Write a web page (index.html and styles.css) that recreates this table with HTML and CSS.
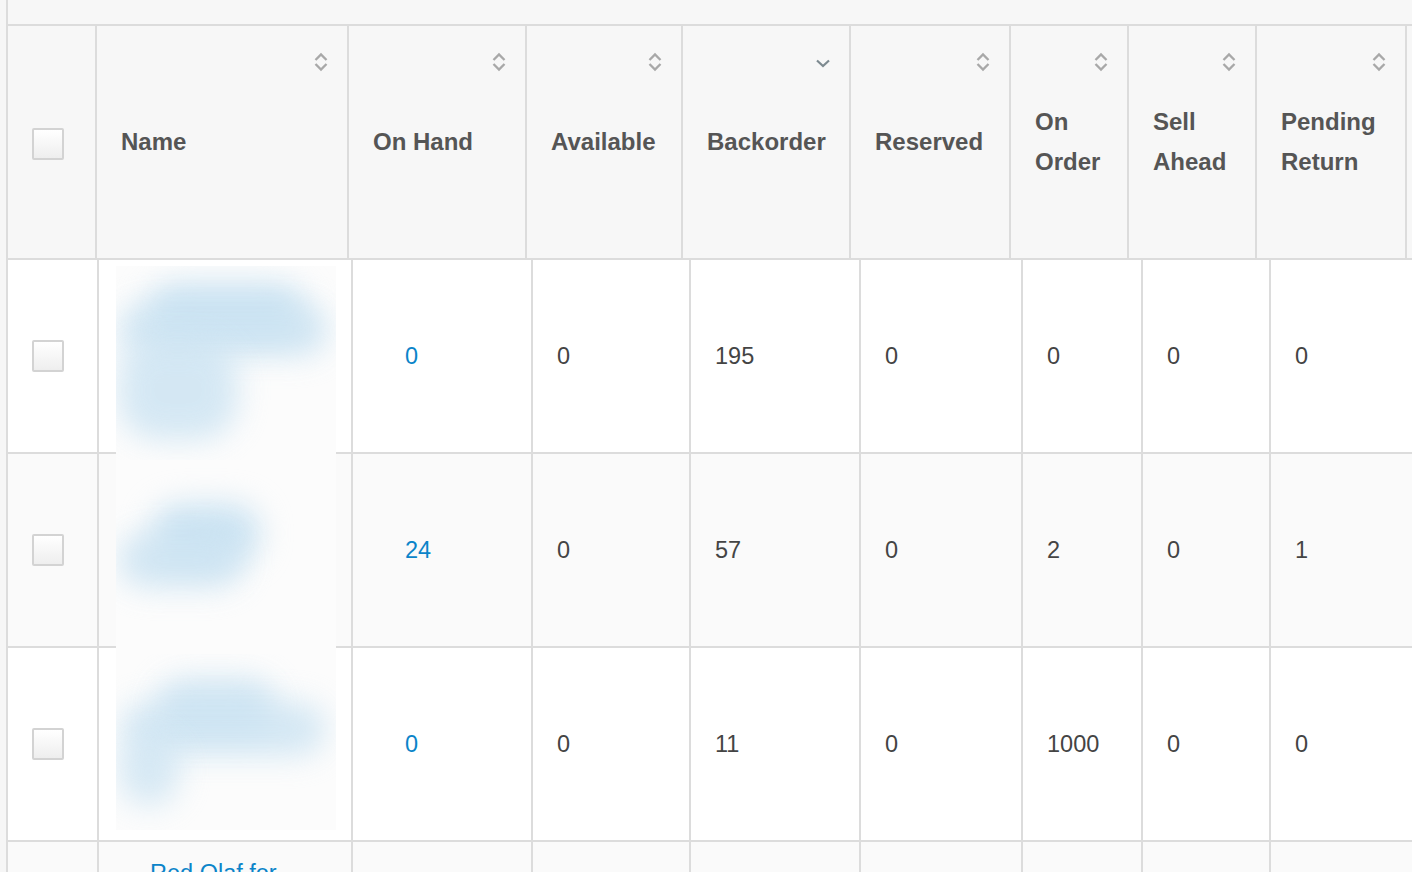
FILE: index.html
```html
<!DOCTYPE html>
<html lang="en">
<head>
  <meta charset="UTF-8">
  <title>Inventory</title>
  <link rel="stylesheet" href="styles.css">
</head>
<body>
  <div class="inventory">
    <div class="toolbar"></div>

    <div class="head-row">
      <div class="hcell"><span class="check check-head"></span></div>
      <div class="hcell"><span class="label">Name</span>
        <svg class="sort" viewBox="0 0 16 22"><path d="M2.5 9 L8 3.5 L13.5 9 M2.5 13 L8 18.5 L13.5 13"/></svg></div>
      <div class="hcell"><span class="label">On Hand</span>
        <svg class="sort" viewBox="0 0 16 22"><path d="M2.5 9 L8 3.5 L13.5 9 M2.5 13 L8 18.5 L13.5 13"/></svg></div>
      <div class="hcell"><span class="label">Available</span>
        <svg class="sort" viewBox="0 0 16 22"><path d="M2.5 9 L8 3.5 L13.5 9 M2.5 13 L8 18.5 L13.5 13"/></svg></div>
      <div class="hcell"><span class="label">Backorder</span>
        <svg class="sort-down" viewBox="0 0 16 10"><path d="M2 2.5 L8 8 L14 2.5"/></svg></div>
      <div class="hcell"><span class="label">Reserved</span>
        <svg class="sort" viewBox="0 0 16 22"><path d="M2.5 9 L8 3.5 L13.5 9 M2.5 13 L8 18.5 L13.5 13"/></svg></div>
      <div class="hcell"><span class="label">On Order</span>
        <svg class="sort" viewBox="0 0 16 22"><path d="M2.5 9 L8 3.5 L13.5 9 M2.5 13 L8 18.5 L13.5 13"/></svg></div>
      <div class="hcell"><span class="label">Sell Ahead</span>
        <svg class="sort" viewBox="0 0 16 22"><path d="M2.5 9 L8 3.5 L13.5 9 M2.5 13 L8 18.5 L13.5 13"/></svg></div>
      <div class="hcell"><span class="label">Pending Return</span>
        <svg class="sort" viewBox="0 0 16 22"><path d="M2.5 9 L8 3.5 L13.5 9 M2.5 13 L8 18.5 L13.5 13"/></svg></div>
      <div class="hcell"></div>
    </div>

    <div class="row">
      <div class="cell"><span class="check"></span></div>
      <div class="cell name">
        <div class="thumb">
          <i class="blob b1a"></i><i class="blob b1b"></i><i class="blob b1c"></i>
        </div>
      </div>
      <div class="cell onhand"><a href="#">0</a></div>
      <div class="cell">0</div>
      <div class="cell">195</div>
      <div class="cell">0</div>
      <div class="cell">0</div>
      <div class="cell">0</div>
      <div class="cell">0</div>
    </div>

    <div class="row alt">
      <div class="cell"><span class="check"></span></div>
      <div class="cell name">
        <div class="thumb">
          <i class="blob b2a"></i><i class="blob b2b"></i>
        </div>
      </div>
      <div class="cell onhand"><a href="#">24</a></div>
      <div class="cell">0</div>
      <div class="cell">57</div>
      <div class="cell">0</div>
      <div class="cell">2</div>
      <div class="cell">0</div>
      <div class="cell">1</div>
    </div>

    <div class="row">
      <div class="cell"><span class="check"></span></div>
      <div class="cell name">
        <div class="thumb thumb-short">
          <i class="blob b3a"></i><i class="blob b3b"></i><i class="blob b3c"></i>
        </div>
      </div>
      <div class="cell onhand"><a href="#">0</a></div>
      <div class="cell">0</div>
      <div class="cell">11</div>
      <div class="cell">0</div>
      <div class="cell">1000</div>
      <div class="cell">0</div>
      <div class="cell">0</div>
    </div>

    <div class="row alt">
      <div class="cell"><span class="check"></span></div>
      <div class="cell name-text"><a href="#">Red Olaf for</a></div>
      <div class="cell onhand"></div>
      <div class="cell"></div>
      <div class="cell"></div>
      <div class="cell"></div>
      <div class="cell"></div>
      <div class="cell"></div>
      <div class="cell"></div>
    </div>
  </div>
</body>
</html>
```

FILE: styles.css
```css
* {
  margin: 0;
  padding: 0;
  box-sizing: border-box;
}

html, body {
  overflow: hidden;
  height: 100%;
}

body {
  background: #f6f6f6;
  font-family: "Liberation Sans", Arial, sans-serif;
  color: #444;
}

.inventory {
  margin-left: 6px;
  border-left: 2px solid #dcdcdc;
  background: #fff;
  min-height: 100%;
}

.toolbar {
  height: 26px;
  background: #f7f7f7;
  border-bottom: 2px solid #dcdcdc;
}

.head-row {
  display: grid;
  grid-template-columns: 89px 252px 178px 156px 168px 160px 118px 128px 150px 60px;
  background: #f7f7f7;
}

.hcell {
  position: relative;
  height: 234px;
  display: flex;
  align-items: center;
  padding: 0 6px 0 24px;
  border-right: 2px solid #dcdcdc;
  border-bottom: 2px solid #dcdcdc;
}

.label {
  font-size: 24px;
  font-weight: bold;
  line-height: 40px;
  color: #555;
}

.sort {
  position: absolute;
  top: 25px;
  right: 18px;
  width: 16px;
  height: 22px;
  fill: none;
  stroke: #a8a8a8;
  stroke-width: 2.3;
}

.sort-down {
  position: absolute;
  top: 32px;
  right: 18px;
  width: 16px;
  height: 10px;
  fill: none;
  stroke: #7d8a90;
  stroke-width: 2.2;
}

.check {
  display: inline-block;
  width: 32px;
  height: 32px;
  border: 2px solid #d3d3d3;
  border-radius: 2px;
  background: linear-gradient(to bottom, #ffffff, #eeeeee);
}

.check-head {
  margin-top: 3px;
}

.row {
  display: grid;
  grid-template-columns: 91px 254px 180px 158px 170px 162px 120px 128px 160px;
  background: #fff;
}

.row.alt {
  background: #fafafa;
}

.cell {
  position: relative;
  height: 194px;
  display: flex;
  align-items: center;
  padding-left: 24px;
  font-size: 23.5px;
  border-right: 2px solid #dcdcdc;
  border-bottom: 2px solid #dcdcdc;
}

.cell a {
  color: #0b84c9;
  text-decoration: none;
}

.onhand {
  padding-left: 52px;
}

.name-text {
  align-items: flex-start;
  padding: 18px 0 0 51px;
}

/* blurred product thumbnail */
.thumb {
  position: absolute;
  z-index: 1;
  left: 17px;
  top: 6px;
  width: 220px;
  height: 200px;
  overflow: hidden;
  background: #fcfcfc;
}

.thumb-short {
  height: 176px;
}

.blob {
  position: absolute;
  display: block;
  background: #cbe3f2;
  border-radius: 40px;
  filter: blur(15px);
}

.b1a { left: 32px; top: 18px; width: 156px; height: 54px; }
.b1b { left: 2px; top: 38px; width: 210px; height: 52px; opacity: .85; }
.b1c { left: 2px; top: 74px; width: 120px; height: 100px; opacity: .8; }

.b2a { left: 36px; top: 44px; width: 108px; height: 58px; }
.b2b { left: 2px; top: 72px; width: 126px; height: 56px; opacity: .85; }

.b3a { left: 40px; top: 24px; width: 120px; height: 56px; opacity: .85; }
.b3b { left: 4px; top: 48px; width: 206px; height: 54px; opacity: .8; }
.b3c { left: 2px; top: 82px; width: 62px; height: 70px; opacity: .75; }
```
